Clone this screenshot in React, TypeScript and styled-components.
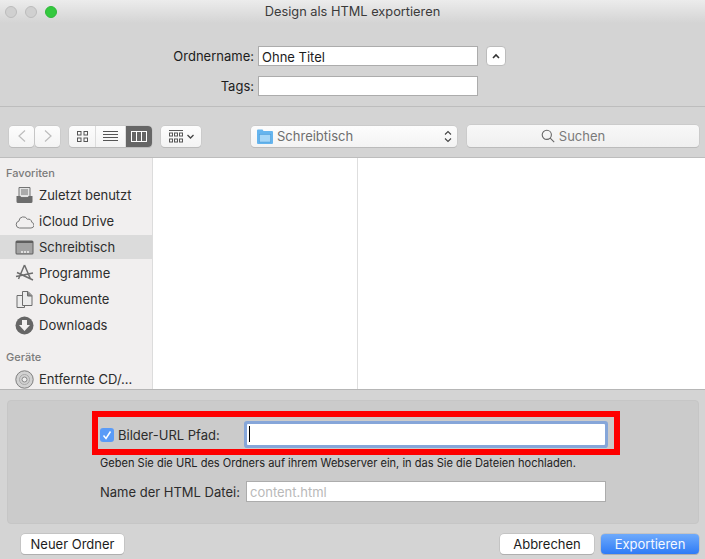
import React from 'react';
import styled, { createGlobalStyle } from 'styled-components';

const Global = createGlobalStyle`
  html, body { margin: 0; padding: 0; background: #d4d4d4; }
  * { box-sizing: border-box; }
  body { font-family: Inter, "Liberation Sans", sans-serif; font-size: 13px; color: #1c1c1c; }
`;

const Dialog = styled.div`
  width: 705px;
  height: 559px;
  display: flex;
  flex-direction: column;
  overflow: hidden;
  background: #d4d4d4;
`;

const TitleBar = styled.div`
  height: 23px;
  flex: none;
  display: flex;
  align-items: center;
  position: relative;
  padding-left: 5px;
  gap: 8px;
  background: linear-gradient(#ececec, #d4d4d4);
`;

const Light = styled.span<{ $color: string; $edge: string }>`
  width: 12px;
  height: 12px;
  border-radius: 50%;
  background: ${(p) => p.$color};
  border: 1px solid ${(p) => p.$edge};
`;

const Title = styled.div`
  position: absolute;
  left: 0;
  right: 0;
  top: 3px;
  text-align: center;
  font-size: 12.8px;
  line-height: 17px;
  color: #3a3a3a;
`;

const NameForm = styled.div`
  height: 84px;
  flex: none;
  border-bottom: 1px solid #bdbdbd;
  display: grid;
  grid-template-columns: 254px 220px auto;
  grid-template-rows: 20px 20px;
  column-gap: 4px;
  row-gap: 10px;
  padding-top: 23px;
  align-items: center;
`;

const FormLabel = styled.label`
  text-align: right;
  font-size: 13px;
`;

const TextBox = styled.div`
  height: 100%;
  background: #fff;
  border: 1px solid #acacac;
  padding-left: 3px;
  font-size: 13px;
  line-height: 20px;
`;

const Disclosure = styled.button`
  width: 20px;
  height: 20px;
  margin-left: 4px;
  padding: 0;
  border: 1px solid #bcbcbc;
  border-radius: 4px;
  background: #fff;
  display: flex;
  align-items: center;
  justify-content: center;
`;

const Toolbar = styled.div`
  height: 51px;
  flex: none;
  border-bottom: 1px solid #bdbdbd;
  display: flex;
  align-items: center;
  padding: 8px 6px 0 9px;
`;

const Segment = styled.div<{ $gap?: number }>`
  height: 21px;
  margin-left: ${(p) => p.$gap ?? 0}px;
  display: flex;
  border-radius: 4px;
  background: linear-gradient(#fdfdfd, #f3f3f3);
  box-shadow: 0 0 0 0.5px #c2c2c2, 0 1px 0 #b4b4b4;
  overflow: hidden;
`;

const SegmentCell = styled.div<{ $w: number; $active?: boolean }>`
  width: ${(p) => p.$w}px;
  display: flex;
  align-items: center;
  justify-content: center;
  gap: 4px;
  background: ${(p) => (p.$active ? '#666' : 'transparent')};
  & + & { border-left: 1px solid #dcdcdc; }
`;

const PathPicker = styled.div`
  width: 206px;
  height: 21px;
  margin-left: 50px;
  display: flex;
  align-items: center;
  padding: 0 5px 0 6px;
  gap: 4px;
  border-radius: 4px;
  background: linear-gradient(#fdfdfd, #f3f3f3);
  box-shadow: 0 0 0 0.5px #c2c2c2, 0 1px 0 #b4b4b4;
  color: #6e6e6e;
  font-size: 13px;
`;

const PathName = styled.span`
  flex: 1;
`;

const SearchBox = styled.div`
  width: 232px;
  height: 22px;
  margin-left: 10px;
  padding-right: 20px;
  display: flex;
  align-items: center;
  justify-content: center;
  gap: 4px;
  border-radius: 4px;
  background: linear-gradient(#f8f8f8, #efefef);
  box-shadow: 0 0 0 0.5px #c2c2c2, 0 1px 0 #b4b4b4;
  color: #7a7a7a;
  font-size: 13px;
`;

const Browser = styled.div`
  height: 232px;
  flex: none;
  display: flex;
  background: #fff;
  border-bottom: 1px solid #b6b6b6;
`;

const Sidebar = styled.div`
  width: 153px;
  flex: none;
  overflow: hidden;
  background: #f1efef;
  border-right: 1px solid #dcdcdc;
  padding-top: 7px;
`;

const SectionHead = styled.div<{ $gap?: number }>`
  height: 16px;
  line-height: 16px;
  margin-top: ${(p) => p.$gap ?? 0}px;
  margin-bottom: 2px;
  padding-left: 6px;
  font-size: 11px;
  font-weight: 500;
  color: #7b7b7b;
`;

const SideItem = styled.div<{ $selected?: boolean }>`
  height: 24px;
  margin-bottom: 2px;
  display: flex;
  align-items: center;
  gap: 5px;
  padding-left: 15px;
  background: ${(p) => (p.$selected ? '#dbdbdb' : 'transparent')};
  font-size: 13px;
  color: #2c2c2c;
  white-space: nowrap;
`;

const Column = styled.div<{ $w?: number }>`
  width: ${(p) => (p.$w ? `${p.$w}px` : 'auto')};
  flex: ${(p) => (p.$w ? 'none' : 1)};
  border-right: ${(p) => (p.$w ? '1px solid #dedede' : 'none')};
`;

const Bottom = styled.div`
  flex: 1;
  padding: 10px 6px 0 7px;
  display: flex;
  flex-direction: column;
`;

const OptionsPanel = styled.div`
  height: 124px;
  flex: none;
  border-radius: 4px;
  background: #cbcbcb;
  border: 1px solid #c6c6c6;
  padding: 10px 0 0 84px;
`;

const Highlight = styled.div`
  width: 528px;
  height: 44px;
  border: 6px solid #fe0000;
  display: flex;
  align-items: center;
  padding: 3px 0 0 2px;
`;

const Check = styled.span`
  width: 14px;
  height: 14px;
  flex: none;
  border-radius: 3px;
  background: #5a9bf7;
  display: flex;
  align-items: center;
  justify-content: center;
`;

const CheckLabel = styled.label`
  width: 133px;
  padding-left: 4px;
  font-size: 13px;
  color: #2c2c2c;
`;

const FocusInput = styled.div`
  width: 358px;
  height: 21px;
  background: #fff;
  box-shadow: 0 0 0 3px #86a6d9;
  border-radius: 1px;
  padding: 2px 0 0 2px;
`;

const Caret = styled.div`
  width: 1px;
  height: 16px;
  background: #000;
`;

const Hint = styled.div`
  height: 15px;
  margin-top: 1px;
  padding-left: 8px;
  font-size: 11.07px;
  line-height: 15px;
  color: #222;
  white-space: nowrap;
`;

const NameRow = styled.div`
  margin-top: 10px;
  height: 21px;
  display: flex;
  align-items: center;
  padding-left: 8px;
`;

const NameLabel = styled.label`
  width: 146px;
  font-size: 13px;
  color: #2c2c2c;
`;

const GhostInput = styled.div`
  width: 360px;
  height: 100%;
  background: #fff;
  border: 1px solid #acacac;
  padding-left: 3px;
  font-size: 13px;
  line-height: 20px;
  color: #b9b9b9;
`;

const Footer = styled.div`
  margin-top: 10px;
  display: flex;
  padding-left: 14px;
`;

const PushButton = styled.button<{ $w: number; $primary?: boolean; $gap?: string }>`
  width: ${(p) => p.$w}px;
  height: 20px;
  margin-left: ${(p) => p.$gap ?? '0'};
  padding: 0;
  border: none;
  border-radius: 4px;
  font-family: inherit;
  font-size: 13px;
  color: ${(p) => (p.$primary ? '#f4f8ff' : '#1c1c1c')};
  background: ${(p) => (p.$primary ? 'linear-gradient(#6eaafb, #2f7bf6)' : '#fff')};
  box-shadow: 0 0 0 0.5px #b4b4b4, 0 1px 0 #aaa;
`;

const ChevronUp = () => (
  <svg width="10" height="8" viewBox="0 0 10 8" fill="none" stroke="#333" strokeWidth="1.6">
    <path d="M2 6l3-3 3 3" />
  </svg>
);

const NavArrow = ({ d }: { d: string }) => (
  <svg width="10" height="14" viewBox="0 0 10 14" fill="none" stroke="#bdbdbd" strokeWidth="1.2">
    <path d={d} />
  </svg>
);

const IconGrid = () => (
  <svg width="11" height="11" viewBox="0 0 11 11" fill="none" stroke="#555">
    <rect x="0.5" y="0.5" width="3.5" height="3.5" />
    <rect x="7" y="0.5" width="3.5" height="3.5" />
    <rect x="0.5" y="7" width="3.5" height="3.5" />
    <rect x="7" y="7" width="3.5" height="3.5" />
  </svg>
);

const IconList = () => (
  <svg width="15" height="11" viewBox="0 0 15 11" stroke="#555">
    <path d="M0 .5h15M0 3.5h15M0 6.5h15M0 9.5h15" />
  </svg>
);

const IconColumns = () => (
  <svg width="16" height="11" viewBox="0 0 16 11" fill="none" stroke="#fff">
    <rect x="0.5" y="0.5" width="15" height="10" />
    <path d="M5.5 0v11M10.5 0v11" />
  </svg>
);

const IconArrange = () => (
  <svg width="14" height="13" viewBox="0 0 14 13" fill="none" stroke="#555">
    <path d="M0 .5h14" />
    <rect x="0.5" y="3" width="3" height="3" />
    <rect x="5.5" y="3" width="3" height="3" />
    <rect x="10.5" y="3" width="3" height="3" />
    <rect x="0.5" y="9" width="3" height="3" />
    <rect x="5.5" y="9" width="3" height="3" />
    <rect x="10.5" y="9" width="3" height="3" />
  </svg>
);

const SmallChevron = () => (
  <svg width="7" height="5" viewBox="0 0 7 5" fill="none" stroke="#444" strokeWidth="1.3">
    <path d="M.5 1l3 3 3-3" />
  </svg>
);

const FolderIcon = () => (
  <svg width="16" height="15" viewBox="0 0 16 15">
    <path d="M0 1.500a1 1 0 011-1h4.500l1 1.500H15a1 1 0 011 1V14a1 1 0 01-1 1H1a1 1 0 01-1-1z" fill="#66b5ee" />
    <rect x="2.300" y="5.300" width="11.400" height="7.800" fill="#a5d6f7" stroke="#4d9fdc" strokeWidth="0.7" />
  </svg>
);

const Stepper = () => (
  <svg width="8" height="13" viewBox="0 0 8 13" fill="none" stroke="#444" strokeWidth="1.1">
    <path d="M1 4.500l3-3 3 3M1 8.500l3 3 3-3" />
  </svg>
);

const Magnifier = () => (
  <svg width="14" height="14" viewBox="0 0 14 14" fill="none" stroke="#666" strokeWidth="1.1">
    <circle cx="5.800" cy="5.800" r="4.600" />
    <path d="M9.200 9.200l4 4" />
  </svg>
);

const SideIcon = ({ children }: { children: React.ReactNode }) => (
  <svg width="19" height="19" viewBox="0 0 19 19">
    {children}
  </svg>
);

const RecentsIcon = () => (
  <SideIcon>
    <path d="M4 1.500h11v10H4z" fill="#e4e4e4" stroke="#737373" />
    <path d="M6 4h7M6 6h7M6 8h7" stroke="#737373" />
    <path d="M1.500 10h4l1 2h6l1-2h4v5.500a1.500 1.500 0 01-1.500 1.500H3a1.500 1.500 0 01-1.500-1.500z" fill="#6d6d6d" />
  </SideIcon>
);

const CloudIcon = () => (
  <SideIcon>
    <path
      d="M4.500 16a3.500 3.500 0 01-.6-6.900 4.500 4.500 0 018.500-1.800 3.300 3.300 0 014.400 3 2.900 2.900 0 01-.8 5.700z"
      fill="none"
      stroke="#777"
      strokeWidth="1"
    />
  </SideIcon>
);

const DesktopIcon = () => (
  <SideIcon>
    <rect x="0.500" y="2.500" width="18" height="14" rx="1.500" fill="#5f5f5f" />
    <rect x="1.500" y="5" width="16" height="10.500" fill="#a3a3a3" />
    <path d="M6 14h2M9 14h2M12 14h2" stroke="#f4f4f4" strokeWidth="1.500" />
  </SideIcon>
);

const AppsIcon = () => (
  <SideIcon>
    <path d="M9.500 1L3.500 15M9.500 1l6 14M1 12.500l17-3.500M2 8.500l16 7.500" fill="none" stroke="#6d6d6d" strokeWidth="1.500" />
  </SideIcon>
);

const DocsIcon = () => (
  <SideIcon>
    <path d="M2 5.500h7.500v12H2z" fill="#ececec" stroke="#6d6d6d" />
    <path d="M7.500 1.500h5.500l4 4v10H7.500z" fill="#ececec" stroke="#6d6d6d" />
    <path d="M12.500 1.500v4.500H17" fill="#8a8a8a" stroke="#6d6d6d" />
  </SideIcon>
);

const DownloadIcon = () => (
  <SideIcon>
    <circle cx="9.500" cy="9.500" r="9" fill="#666" />
    <path d="M7 4h5v5h3l-5.500 6L4 9h3z" fill="#f1efef" />
  </SideIcon>
);

const DiscIcon = () => (
  <SideIcon>
    <circle cx="9.500" cy="9.500" r="8.700" fill="#d2d2d2" stroke="#7e7e7e" />
    <circle cx="9.500" cy="9.500" r="5" fill="none" stroke="#a8a8a8" />
    <circle cx="9.500" cy="9.500" r="2.500" fill="#eee" stroke="#888" />
  </SideIcon>
);

const CheckMark = () => (
  <svg width="10" height="10" viewBox="0 0 10 10" fill="none" stroke="#fff" strokeWidth="1.500">
    <path d="M1.500 5.500l2.500 3 4.500-7" />
  </svg>
);

export default function App() {
  return (
    <Dialog>
      <Global />
      <TitleBar>
        <Light $color="#d0d0d0" $edge="#bcbcbc" />
        <Light $color="#d0d0d0" $edge="#bcbcbc" />
        <Light $color="#34c93f" $edge="#2fb83a" />
        <Title>Design als HTML exportieren</Title>
      </TitleBar>

      <NameForm>
        <FormLabel>Ordnername:</FormLabel>
        <TextBox>Ohne Titel</TextBox>
        <Disclosure>
          <ChevronUp />
        </Disclosure>
        <FormLabel>Tags:</FormLabel>
        <TextBox />
      </NameForm>

      <Toolbar>
        <Segment>
          <SegmentCell $w={25}>
            <NavArrow d="M8 1.500L2 7l6 5.500" />
          </SegmentCell>
        </Segment>
        <Segment $gap={1}>
          <SegmentCell $w={25}>
            <NavArrow d="M2 1.500L8 7l-6 5.500" />
          </SegmentCell>
        </Segment>
        <Segment $gap={9}>
          <SegmentCell $w={26}>
            <IconGrid />
          </SegmentCell>
          <SegmentCell $w={30}>
            <IconList />
          </SegmentCell>
          <SegmentCell $w={27} $active>
            <IconColumns />
          </SegmentCell>
        </Segment>
        <Segment $gap={9}>
          <SegmentCell $w={40}>
            <IconArrange />
            <SmallChevron />
          </SegmentCell>
        </Segment>
        <PathPicker>
          <FolderIcon />
          <PathName>Schreibtisch</PathName>
          <Stepper />
        </PathPicker>
        <SearchBox>
          <Magnifier />
          <span>Suchen</span>
        </SearchBox>
      </Toolbar>

      <Browser>
        <Sidebar>
          <SectionHead>Favoriten</SectionHead>
          <SideItem>
            <RecentsIcon />
            Zuletzt benutzt
          </SideItem>
          <SideItem>
            <CloudIcon />
            iCloud Drive
          </SideItem>
          <SideItem $selected>
            <DesktopIcon />
            Schreibtisch
          </SideItem>
          <SideItem>
            <AppsIcon />
            Programme
          </SideItem>
          <SideItem>
            <DocsIcon />
            Dokumente
          </SideItem>
          <SideItem>
            <DownloadIcon />
            Downloads
          </SideItem>
          <SectionHead $gap={12}>Geräte</SectionHead>
          <SideItem>
            <DiscIcon />
            Entfernte CD/...
          </SideItem>
        </Sidebar>
        <Column $w={205} />
        <Column />
      </Browser>

      <Bottom>
        <OptionsPanel>
          <Highlight>
            <Check>
              <CheckMark />
            </Check>
            <CheckLabel>Bilder-URL Pfad:</CheckLabel>
            <FocusInput>
              <Caret />
            </FocusInput>
          </Highlight>
          <Hint>Geben Sie die URL des Ordners auf ihrem Webserver ein, in das Sie die Dateien hochladen.</Hint>
          <NameRow>
            <NameLabel>Name der HTML Datei:</NameLabel>
            <GhostInput>content.html</GhostInput>
          </NameRow>
        </OptionsPanel>
        <Footer>
          <PushButton $w={103}>Neuer Ordner</PushButton>
          <PushButton $w={94} $gap="auto">
            Abbrechen
          </PushButton>
          <PushButton $w={98} $gap="7px" $primary>
            Exportieren
          </PushButton>
        </Footer>
      </Bottom>
    </Dialog>
  );
}
